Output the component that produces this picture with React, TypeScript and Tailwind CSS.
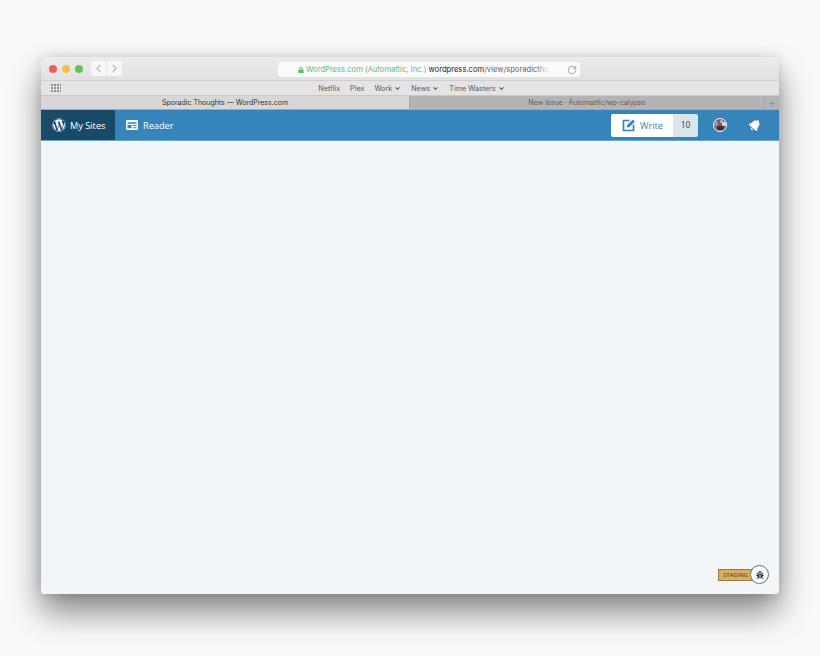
// App.tsx - Safari window showing the WordPress.com masterbar on an empty page
import React from "react";
import { ChevronDown, ChevronLeft, ChevronRight, RotateCw } from "lucide-react";
import { FaBell, FaBug, FaLock, FaWordpress } from "react-icons/fa";

const sansStack = "font-['Inter','Liberation_Sans',sans-serif]";

const Bookmark = ({ label, menu }: { label: string; menu?: boolean }) => (
  <span className="flex items-center gap-[2px]">
    {label}
    {menu && <ChevronDown size={7} strokeWidth={3.5} />}
  </span>
);

const ReaderIcon = () => (
  <svg width="12" height="10" viewBox="0 0 13 11" className="shrink-0">
    <path
      fill="#fff"
      fillRule="evenodd"
      d="M1 0h11a1 1 0 0 1 1 1v9a1 1 0 0 1-1 1H1a1 1 0 0 1-1-1V1a1 1 0 0 1 1-1zM1.500 2.500v1.500h10V2.500zM1.500 5.500v3.500h4.500V5.500zM7.500 5.500v1h4v-1zM7.500 8v1h4V8z"
    />
  </svg>
);

const WriteIcon = () => (
  <svg width="14" height="14" viewBox="0 0 14 14" fill="none" className="shrink-0">
    <path d="M7.500 2.500H1.500v10h10V6.500" stroke="#3585ba" strokeWidth="1.700" />
    <path d="M5 9.300V7.200L10.800 1.400l2.100 2.100L7.100 9.300z" fill="#3585ba" />
  </svg>
);

const Avatar = () => (
  <div className="relative w-[14px] h-[14px] rounded-full border border-white bg-[#76606e] overflow-hidden">
    <div className="absolute left-[6px] top-[1px] w-[3px] h-[3px] rounded-full bg-[#e8a8b0]" />
    <div className="absolute left-[3px] top-[7px] w-[7px] h-[4px] rounded-full bg-[#3a3038]" />
    <div className="absolute right-0 top-[3px] w-[4px] h-[4px] rounded-full bg-[#efe6e4]" />
    <div className="absolute left-0 top-[2px] w-[4px] h-[5px] rounded-full bg-[#a09aa4]" />
  </div>
);

export default function App() {
  return (
    <div className={`w-[820px] h-[656px] bg-[#f9f9f9] pt-[57px] pl-[41px] overflow-hidden ${sansStack}`}>
      <div className="relative w-[738px] h-[537px] flex flex-col rounded-[4px] overflow-hidden shadow-[0_18px_32px_rgba(0,0,0,0.46),0_0_12px_rgba(0,0,0,0.13)]">
        {/* title bar */}
        <div className="relative h-[24px] flex items-center bg-gradient-to-b from-[#edecec] to-[#e2e1e2] border-b border-[#d0cfd0]">
          <div className="flex items-center gap-[5px] ml-[8px]">
            <div className="w-[8px] h-[8px] rounded-full bg-[#ed5f57]" />
            <div className="w-[8px] h-[8px] rounded-full bg-[#f4bd4f]" />
            <div className="w-[8px] h-[8px] rounded-full bg-[#5fc454]" />
          </div>
          <div className="flex gap-px ml-[8px]">
            <div className="w-[15px] h-[15px] flex items-center justify-center rounded-l-[3px] bg-[#f8f7f8] text-[#77767a]">
              <ChevronLeft size={13} strokeWidth={1.5} />
            </div>
            <div className="w-[15px] h-[15px] flex items-center justify-center rounded-r-[3px] bg-[#f8f7f8] text-[#77767a]">
              <ChevronRight size={13} strokeWidth={1.5} />
            </div>
          </div>
          <div className="absolute left-[237px] top-[5px] w-[302px] h-[15px] flex items-center rounded-[3px] bg-[#fbfbfb] pl-[20px] text-[7.600px] whitespace-nowrap">
            <FaLock size={6} className="text-[#5cba73] mr-[2px] shrink-0" />
            <span className="text-[#5cba73]">WordPress.com (Automattic, Inc.)&nbsp;</span>
            <span className="text-[#222]">wordpress.com</span>
            <span className="text-[#666]">/view/sporadicthoug</span>
            {/* url fades out before the reload button */}
            <div className="absolute left-[258px] top-0 w-[24px] h-full bg-gradient-to-r from-transparent to-[#fbfbfb] to-60%" />
            <RotateCw size={10} strokeWidth={1.3} className="absolute right-[3px] top-[3px] text-[#66656a]" />
          </div>
        </div>

        {/* bookmarks bar */}
        <div className="relative h-[15px] flex items-center justify-center gap-[10px] pt-[2px] pl-[3px] bg-[#e5e4e5] border-b border-[#c9c8c9] text-[7.200px] text-[#5c5b5f]">
          <svg width="10" height="8" viewBox="0 0 10 8" className="absolute left-[10px] top-[3px]" fill="#8f8e92">
            <path d="M0 0h2v2H0zM3 0h2v2H3zM6 0h2v2H6zM9 0h1v2H9zM0 3h2v2H0zM3 3h2v2H3zM6 3h2v2H6zM9 3h1v2H9zM0 6h2v2H0zM3 6h2v2H3zM6 6h2v2H6zM9 6h1v2H9z" />
          </svg>
          <Bookmark label="Netflix" />
          <Bookmark label="Plex" />
          <Bookmark label="Work" menu />
          <Bookmark label="News" menu />
          <Bookmark label="Time Wasters" menu />
        </div>

        {/* tabs */}
        <div className="h-[14px] flex items-center bg-[#b5b4b5] text-[7px] border-b border-[#a8a7a9]">
          <div className="w-[369px] h-full flex items-center justify-center pt-px bg-[#d8d7d8] text-[#333] border-r border-[#a5a4a6]">
            Sporadic Thoughts — WordPress.com
          </div>
          <div className="flex-1 h-full flex items-center justify-center pt-px text-[#5c5b5f]">
            New Issue · Automattic/wp-calypso
          </div>
          <div className="w-[15px] h-full flex items-center justify-center border-l border-[#a5a4a6] text-[#8a898c] text-[12px] font-light leading-none">
            +
          </div>
        </div>

        {/* masterbar */}
        <div className="h-[31px] flex items-stretch bg-[#3585ba] border-b border-[#68a5cd] font-['Open_Sans','Liberation_Sans',sans-serif] text-[9.200px] text-white">
          <div className="w-[74px] flex items-center gap-[4px] pl-[11px] bg-[#1a4a6a] whitespace-nowrap">
            <FaWordpress size={14} className="shrink-0" />
            <span className="font-medium pt-px">My Sites</span>
          </div>
          <div className="flex items-center gap-[5px] pl-[11px]">
            <ReaderIcon />
            <span className="font-medium pt-px">Reader</span>
          </div>
          <div className="flex items-center ml-auto">
            <div className="flex h-[23px] rounded-[2px] overflow-hidden">
              <div className="w-[62px] flex items-center gap-[4px] pl-[11px] bg-white text-[#3585ba]">
                <WriteIcon />
                <span className="pt-px">Write</span>
              </div>
              <div className="w-[25px] flex items-center justify-center pt-px bg-[#dae5ec] text-[#2e4453] text-[8.500px]">10</div>
            </div>
            <div className="w-[14px] ml-[15px]">
              <Avatar />
            </div>
            <div className="w-[12px] ml-[22px] mr-[18px]">
              <FaBell size={12} className="rotate-[40deg]" />
            </div>
          </div>
        </div>

        {/* empty content */}
        <div className="flex-1 bg-[#f2f6f9]" />

        {/* staging badge */}
        <div className="absolute left-[677px] bottom-[13px] w-[36px] h-[12px] flex items-center pl-[4px] bg-[#dcae58] border border-[#8d7a4e] text-[5.800px] font-semibold text-[#5a5444] font-['Open_Sans','Liberation_Sans',sans-serif]">
          STAGING
        </div>
        <div className="absolute left-[709px] bottom-[10px] w-[19px] h-[19px] flex items-center justify-center rounded-full bg-white border border-[#5e7487] text-[#2e4453]">
          <FaBug size={8} />
        </div>
      </div>
    </div>
  );
}
